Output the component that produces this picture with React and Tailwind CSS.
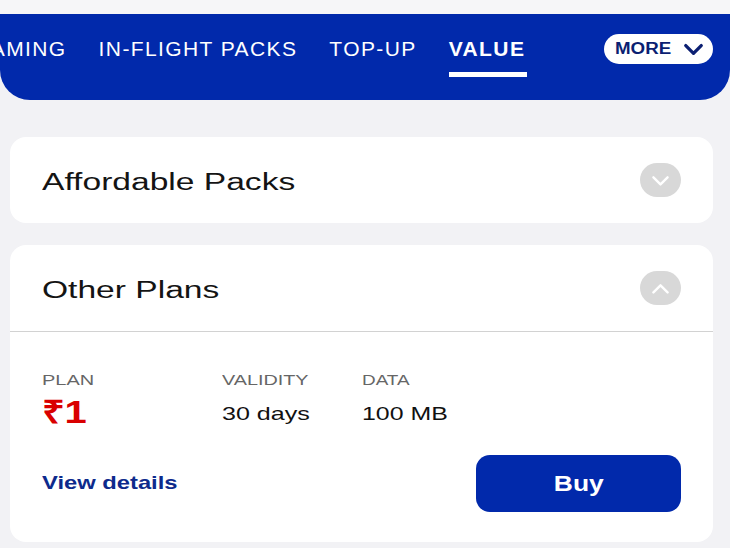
const font = { fontFamily: '"Liberation Sans", Arial, sans-serif' };

function Chevron({ up = false, className = "", width = 3 }) {
  return (
    <svg viewBox="0 0 24 14" className={className} fill="none">
      <polyline
        points={up ? "3,12 12,3 21,12" : "3,3 12,12 21,3"}
        stroke="currentColor"
        strokeWidth={width}
        strokeLinecap="round"
        strokeLinejoin="round"
      />
    </svg>
  );
}

function Toggle({ up }) {
  return (
    <div className="w-[41px] h-[34px] rounded-full bg-[#d8d8d8] flex items-center justify-center text-white">
      <Chevron up={up} className="w-[19px] h-[11px]" />
    </div>
  );
}

export default function App() {
  const tabs = ["GAMING", "IN-FLIGHT PACKS", "TOP-UP"];

  return (
    <div className="w-[730px] h-[548px] overflow-hidden bg-[#f2f2f5]" style={font}>
      <div className="h-[14px] bg-[#f6f6f8]" />

      {/* Tab bar */}
      <div className="h-[86px] bg-[#0129ab] rounded-b-[30px] flex items-start pt-[23px] overflow-hidden">
        <div className="flex items-start gap-[32px] ml-[-27px] text-white text-[21px] tracking-[1.4px] leading-[24px]">
          {tabs.map((t) => (
            <span key={t} className="font-normal">{t}</span>
          ))}
          <div className="flex flex-col">
            <span className="font-bold">VALUE</span>
            <div className="h-[5px] bg-white mt-[11px] mr-[-2px]" />
          </div>
        </div>
        <div className="ml-auto mr-[17px] mt-[-3px] h-[30px] w-[109px] rounded-full bg-white flex items-center pl-[11px] text-[#0b1f72]">
          <span className="inline-block origin-left scale-x-[1.17] font-bold text-[16px] leading-none">MORE</span>
          <Chevron width={3.8} className="ml-[20px] w-[21px] h-[12px]" />
        </div>
      </div>

      {/* Affordable packs */}
      <div className="mt-[37px] ml-[10px] mr-[17px] h-[86px] rounded-[16px] bg-white px-8 flex items-center justify-between">
        <span className="inline-block origin-left scale-x-[1.46] text-[23px] text-[#141414] mt-[4px]">Affordable Packs</span>
        <Toggle />
      </div>

      {/* Other plans */}
      <div className="mt-[22px] ml-[10px] mr-[17px] h-[297px] rounded-[16px] bg-white flex flex-col">
        <div className="h-[87px] px-8 flex items-center justify-between border-b border-[#d2d2d2]">
          <span className="inline-block origin-left scale-x-[1.46] text-[23px] text-[#141414] mt-[4px]">Other Plans</span>
          <Toggle up />
        </div>

        <div className="px-8 pt-[39px]">
          <div className="grid grid-cols-[180px_140px_1fr] items-start">
            <div className="flex flex-col">
              <span className="inline-block origin-left scale-x-[1.33] text-[15px] leading-[18px] text-[#666666]">PLAN</span>
              <span className="inline-block origin-left scale-x-[1.25] text-[32px] leading-[36px] font-bold text-[#d90000] mt-[5px]">₹1</span>
            </div>
            <div className="flex flex-col">
              <span className="inline-block origin-left scale-x-[1.32] text-[15px] leading-[18px] text-[#666666]">VALIDITY</span>
              <span className="inline-block origin-left scale-x-[1.32] text-[19px] leading-[22px] text-[#111111] mt-[14px]">30 days</span>
            </div>
            <div className="flex flex-col">
              <span className="inline-block origin-left scale-x-[1.26] text-[15px] leading-[18px] text-[#666666]">DATA</span>
              <span className="inline-block origin-left scale-x-[1.31] text-[19px] leading-[22px] text-[#111111] mt-[14px]">100 MB</span>
            </div>
          </div>

          <div className="mt-[25px] flex items-center justify-between">
            <span className="inline-block origin-left scale-x-[1.25] text-[19px] font-bold text-[#0d2a8c]">View details</span>
            <button className="w-[205px] h-[57px] rounded-[14px] bg-[#0129ab] text-white flex items-center justify-center">
              <span className="inline-block scale-x-[1.2] text-[22px] font-bold">Buy</span>
            </button>
          </div>
        </div>
      </div>
    </div>
  );
}
